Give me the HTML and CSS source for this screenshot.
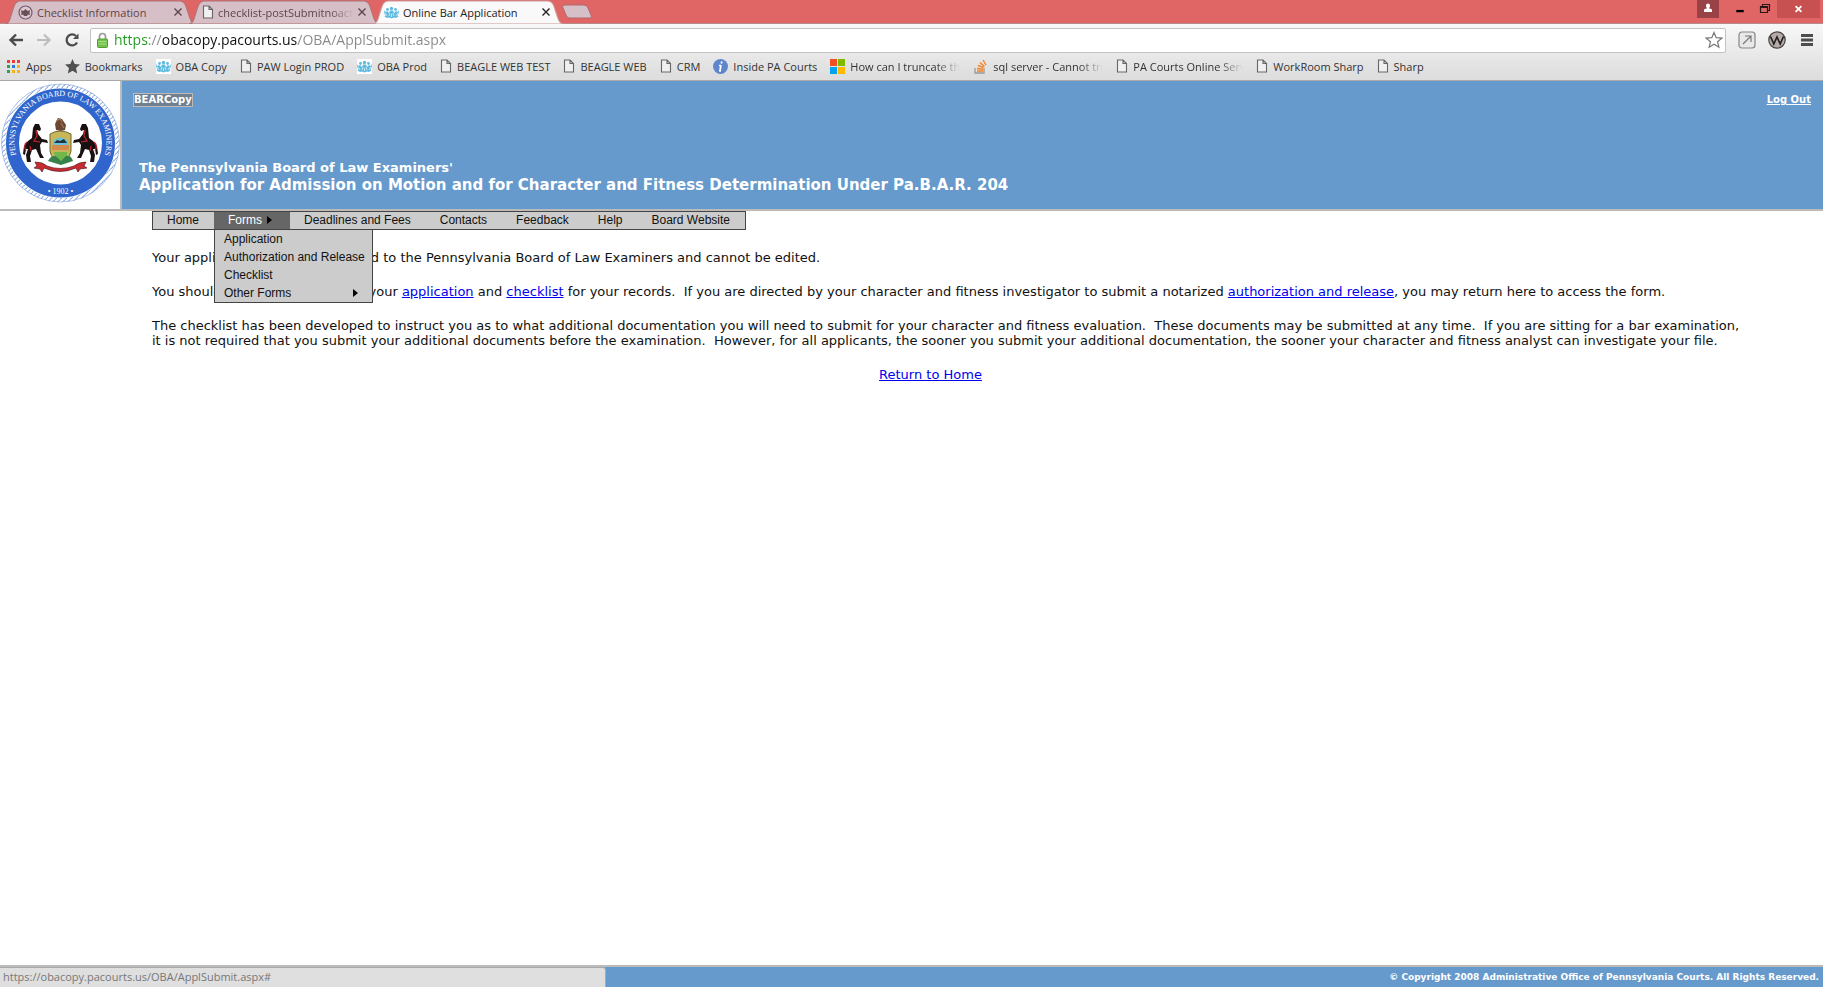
FILE: index.html
```html
<!DOCTYPE html>
<html lang="en">
<head>
<meta charset="utf-8">
<title>Online Bar Application</title>
<link rel="stylesheet" href="styles.css">
</head>
<body>
<svg class="defs" aria-hidden="true">
  <symbol id="page" viewBox="0 0 12 14"><path d="M1.500 1h5.500l3.500 3.500V13h-9zM7 1v3.500h3.500" fill="#f0f0f0" stroke="#666" stroke-width="1.100"/></symbol>
  <symbol id="oba" viewBox="0 0 15 15"><path fill="#fff" d="M0 0h15v15H0z"/><g fill="#5fbbe0"><circle cx="7.500" cy="3.500" r="1.700"/><circle cx="3.500" cy="4.500" r="1.400"/><circle cx="11.500" cy="4.500" r="1.400"/><path d="M0 5l1.500 2L3 6l2 2 1-2.500h3L10 8l2-2 1.500 1L15 5l-.5 4-1 1 1 1.500-2.500 1.500-2-.5-2.500 1-2.500-1-2 .5L.5 11.500l1-1.500-1-1z"/></g><path d="M5 11l1-3M10 11L9 8M7.500 12V9M2.500 11l-1-3M12.500 11l1-3" stroke="#d8f2fb" stroke-width=".8"/></symbol>
  <symbol id="x" viewBox="0 0 8 8"><path d="M.5.5l7 7M7.500.5l-7 7" stroke="currentColor" stroke-width="1.400"/></symbol>
</svg>

<header class="browser">
  <div class="tabstrip">
    <div class="tabs" role="tablist">
      <div class="tab"><svg class="shape" viewBox="0 0 190 23" preserveAspectRatio="none"><path d="M0 23C5 22 5 18 7 12S10 1 15 1H175C180 1 181 6 183 12S186 22 190 23Z"/></svg>
        <button class="tab-label" role="tab"><svg class="ico15" viewBox="0 0 15 15"><circle cx="7.500" cy="7.500" r="6.500" fill="#dcc7cc" stroke="#6d5b73" stroke-width="1.200"/><path d="M3 5l2 1 1-.5L7.500 4 9 5.500l1 .5 2-1-.5 3 .5 2-2-.5-1 1.500H6L5 9.500 3 10l.5-2z" fill="#695058"/></svg><span>Checklist Information</span></button>
        <button class="tab-close" aria-label="Close Checklist Information"><svg><use href="#x"/></svg></button></div>
      <div class="tab"><svg class="shape" viewBox="0 0 190 23" preserveAspectRatio="none"><path d="M0 23C5 22 5 18 7 12S10 1 15 1H175C180 1 181 6 183 12S186 22 190 23Z"/></svg>
        <button class="tab-label" role="tab"><svg class="pg"><use href="#page"/></svg><span class="fade">checklist-postSubmitnoaction</span></button>
        <button class="tab-close" aria-label="Close checklist"><svg><use href="#x"/></svg></button></div>
      <div class="tab active"><svg class="shape" viewBox="0 0 190 23" preserveAspectRatio="none"><path d="M0 23C5 22 5 18 7 12S10 1 15 1H175C180 1 181 6 183 12S186 22 190 23Z"/></svg>
        <button class="tab-label" role="tab" aria-selected="true"><svg class="ico15"><use href="#oba"/></svg><span>Online Bar Application</span></button>
        <button class="tab-close" aria-label="Close Online Bar Application"><svg><use href="#x"/></svg></button></div>
      <button class="newtab" aria-label="New tab"><svg viewBox="0 0 32 15"><path d="M4 1H22C25 1 26 2 27 4L30 11C31 13 30 14 28 14H9C7 14 6 13 5 11L2 4C1 2 2 1 4 1Z" fill="#d6c0c8" stroke="#b0686e"/></svg></button>
    </div>
    <div class="window-controls">
      <button class="user" aria-label="Profile"><svg viewBox="0 0 22 18"><circle cx="11" cy="5.500" r="2"/><path d="M9 6h4l-1 2.500h-2zM7 12V9.500l2-1h4l2 1V12z"/></svg></button>
      <button class="min" aria-label="Minimize"><svg viewBox="0 0 28 18"><path d="M10 10h8v2.500h-8z"/></svg></button>
      <button class="max" aria-label="Restore"><svg viewBox="0 0 20 18"><path d="M5.500 6.500h7v6h-7zM5 7.500h8M7.500 6V4.500h7v6H13" fill="none" stroke="#2b1717" stroke-width="1.200"/></svg></button>
      <button class="close" aria-label="Close"><svg viewBox="0 0 44 18"><path d="M19 6l6 6M25 6l-6 6" stroke="#fff" stroke-width="1.800"/></svg></button>
    </div>
  </div>
  <div class="toolbar">
    <button aria-label="Back"><svg viewBox="0 0 16 16"><path d="M15 8H3M8 2.500L2.500 8 8 13.500" fill="none" stroke="#4b4b4b" stroke-width="2.400"/></svg></button>
    <button aria-label="Forward"><svg viewBox="0 0 16 16"><path d="M1 8h12M8 2.500L13.500 8 8 13.500" fill="none" stroke="#bdbdbd" stroke-width="2.200"/></svg></button>
    <button aria-label="Reload"><svg viewBox="0 0 16 16"><path d="M13 10.500A5.500 5.500 0 1 1 12 4" fill="none" stroke="#4b4b4b" stroke-width="2.300"/><path d="M14.500 1.500V7H9z" fill="#4b4b4b"/></svg></button>
    <label class="omnibox">
      <svg class="lock" viewBox="0 0 11 16"><path d="M2.500 8V4.500a3 3 0 0 1 6 0V8" fill="none" stroke="#999" stroke-width="1.700"/><rect x=".5" y="7" width="10" height="8.500" rx="1" fill="#76c14c" stroke="#529c34"/><path d="M1.500 9.500h8M1.500 12h8" stroke="#a6df84"/></svg>
      <input type="text" aria-label="Address" value="https://obacopy.pacourts.us/OBA/ApplSubmit.aspx">
      <svg class="fav" viewBox="0 0 18 18"><path d="M9 1.500l2.200 5.200 5.600.4-4.300 3.600 1.400 5.500L9 13.200l-4.900 3 1.400-5.500L1.200 7.100l5.600-.4z" fill="#fff" stroke="#777" stroke-width="1.200"/></svg>
    </label>
    <button class="ext" aria-label="Open externally"><svg viewBox="0 0 18 18"><rect x="1" y="1" width="16" height="16" rx="3" fill="#e8e8e8" stroke="#858585" stroke-width="1.200"/><path d="M5 13l8-8M7 5h6v6" fill="none" stroke="#777" stroke-width="1.200"/></svg></button>
    <button class="ext" aria-label="W extension"><svg viewBox="0 0 18 18"><circle cx="9" cy="9" r="8.200" fill="#b7aba7" stroke="#444" stroke-width="1.200"/><path d="M2.500 5.500l3.300 7.500L9 6l3.200 7 3.300-7.500" fill="none" stroke="#222" stroke-width="1.700"/></svg></button>
    <button class="ext" aria-label="Menu"><svg viewBox="0 0 18 18"><path d="M3 4.500h12M3 9h12M3 13.500h12" stroke="#4d4d4d" stroke-width="2.800"/></svg></button>
  </div>
  <nav class="bookmarks" aria-label="Bookmarks">
    <a href="#"><svg class="ico15" viewBox="0 0 15 15"><path d="M1 1h3v3H1zM6 1h3v3H6zM11 1h3v3h-3z" fill="#ea3d35"/><path d="M1 6h3v3H1zM1 11h3v3H1z" fill="#2ba24c"/><path d="M6 6h3v3H6z" fill="#2c7be5"/><path d="M11 6h3v3h-3zM6 11h3v3H6zM11 11h3v3h-3z" fill="#f6b312"/></svg><span>Apps</span></a>
    <a href="#"><svg class="ico15" viewBox="0 0 15 15"><path d="M7.500 0l2.200 5 5.300.5-4 3.600 1.200 5.400-4.700-2.800-4.700 2.800L4 9.100 0 5.500 5.300 5z" fill="#505050"/></svg><span>Bookmarks</span></a>
    <a href="#"><svg class="ico15"><use href="#oba"/></svg><span>OBA Copy</span></a>
    <a href="#"><svg class="pg"><use href="#page"/></svg><span>PAW Login PROD</span></a>
    <a href="#"><svg class="ico15"><use href="#oba"/></svg><span>OBA Prod</span></a>
    <a href="#"><svg class="pg"><use href="#page"/></svg><span>BEAGLE WEB TEST</span></a>
    <a href="#"><svg class="pg"><use href="#page"/></svg><span>BEAGLE WEB</span></a>
    <a href="#"><svg class="pg"><use href="#page"/></svg><span>CRM</span></a>
    <a href="#"><svg class="ico15" viewBox="0 0 15 15"><circle cx="7.500" cy="7.500" r="7.500" fill="#5e86cc"/><path d="M8.800 2.500l-.4 2M8 6l-1.200 6.500M6 6.500h2M6 12h2" stroke="#fff" stroke-width="1.700"/></svg><span>Inside PA Courts</span></a>
    <a href="#"><svg class="ico15" viewBox="0 0 15 15"><path d="M0 0h7v7H0z" fill="#f25022"/><path d="M8 0h7v7H8z" fill="#7fba00"/><path d="M0 8h7v7H0z" fill="#00a4ef"/><path d="M8 8h7v7H8z" fill="#ffb900"/></svg><span class="fade">How can I truncate the text</span></a>
    <a href="#"><svg class="ico15" viewBox="0 0 15 15"><path d="M2 9v5h9V9" fill="none" stroke="#999" stroke-width="1.300"/><path d="M4 12h6M4 9.500l6 .8M5 6.500l5.500 2M7 3.500l4.500 4M10 1l3 5" stroke="#f48024" stroke-width="1.400"/></svg><span class="fade">sql server - Cannot truncate table</span></a>
    <a href="#"><svg class="pg"><use href="#page"/></svg><span class="fade">PA Courts Online Services</span></a>
    <a href="#"><svg class="pg"><use href="#page"/></svg><span>WorkRoom Sharp</span></a>
    <a href="#"><svg class="pg"><use href="#page"/></svg><span>Sharp</span></a>
  </nav>
</header>

<section class="banner">
  <div class="seal">
    <svg viewBox="0 0 120 126" role="img" aria-label="Pennsylvania Board of Law Examiners, 1902">
      <defs>
        <path id="arc" d="M19.500 82A46 46 0 1 1 101.500 82"/>
        <pattern id="rope" width="5" height="5" patternUnits="userSpaceOnUse"><path d="M0 0h5v5H0z" fill="#fff"/><path d="M-1 4Q2 3 4-1M2 6Q5 5 7 1" fill="none" stroke="#6f97dd" stroke-width="1"/></pattern>
      </defs>
      <circle cx="60.500" cy="62" r="57" fill="none" stroke="url(#rope)" stroke-width="4"/>
      <circle cx="60.500" cy="62" r="59" fill="none" stroke="#7d9fdc" stroke-width=".6"/>
      <circle cx="60.500" cy="62" r="48" fill="#fff" stroke="#2f65cc" stroke-width="13"/>
      <text class="seal-name"><textPath href="#arc" startOffset="50%">PENNSYLVANIA BOARD OF LAW EXAMINERS</textPath></text>
      <text class="seal-year" x="60.500" y="113">• 1902 •</text>
      <g id="horse"><path d="M33 47l2-4 4 0 2 5-1 2-3-1 1 4 4 5 5 1 1 3-6-1-2 3 1 8 3 5h-4l-4-9-4 1-2 6 1 6h-4l-1-7 2-6-2 0-1 6-2-1 1-8 4-5 4-3z" fill="#191012"/><path d="M36 49l1 6-3 5 6 1M30 65l1 5M27 61q-4 3-1 9" fill="none" stroke="#c02431" stroke-width="1.200"/></g>
      <use href="#horse" transform="matrix(-1 0 0 1 121 0)"/>
      <path d="M50 53q10-6 21 0v17q-2 10-10.500 13Q52 80 50 70z" fill="#c8b659" stroke="#6c6731"/>
      <path d="M53 60q7-7 15 0v4H53z" fill="#66c3df"/><path d="M54 62h13l-3-4-4 2-3-1z" fill="#27343e"/>
      <path d="M52 64h17v5H52z" fill="#d58a4d"/><path d="M54 71h13v5l-6 4-6-4z" fill="#70b84c"/>
      <path d="M48 80q4-7 9-4l4 4 5-5q5-1 7 5l-12 4z" fill="#38814a"/>
      <path d="M56 49l-1-6 3-6 4 1 4 6-1 5-4 1z" fill="#6c4733"/><path d="M56 40l4-2 2 3M61 42l3 5" fill="none" stroke="#b9845a"/>
      <path d="M34 87l3-2-2-4q8 0 12 4 13 5 27 0 5-4 12-4l-2 4 3 2-7 1-2 3-2-4q-16 7-32 0l-2 4-2-3z" fill="#c92b32" stroke="#591c1f" stroke-width=".7"/>
    </svg>
  </div>
  <div class="banner-main">
    <div class="banner-top"><span class="env">BEARCopy</span><a href="#" class="logout">Log Out</a></div>
    <h1><small>The Pennsylvania Board of Law Examiners'</small>Application for Admission on Motion and for Character and Fitness Determination Under Pa.B.A.R. 204</h1>
  </div>
</section>

<nav class="menu" aria-label="Main">
  <a href="#">Home</a>
  <div class="has-sub"><a href="#" class="open">Forms<i class="arrow"></i></a>
    <div class="submenu"><a href="#">Application</a><a href="#">Authorization and Release</a><a href="#">Checklist</a><a href="#">Other Forms<i class="arrow"></i></a></div>
  </div>
  <a href="#">Deadlines and Fees</a><a href="#">Contacts</a><a href="#">Feedback</a><a href="#">Help</a><a href="#">Board Website</a>
</nav>

<main>
  <p>Your application has been released to the Pennsylvania Board of Law Examiners and cannot be edited.</p>
  <p>You should print a record of both your <a href="#">application</a> and <a href="#">checklist</a> for your records.&nbsp; If you are directed by your character and fitness investigator to submit a notarized <a href="#">authorization and release</a>, you may return here to access the form.</p>
  <p>The checklist has been developed to instruct you as to what additional documentation you will need to submit for your character and fitness evaluation.&nbsp; These documents may be submitted at any time.&nbsp; If you are sitting for a bar examination, it is not required that you submit your additional documents before the examination.&nbsp; However, for all applicants, the sooner you submit your additional documentation, the sooner your character and fitness analyst can investigate your file.</p>
  <p class="return"><a href="#">Return to Home</a></p>
</main>
<footer>© Copyright 2008 Administrative Office of Pennsylvania Courts. All Rights Reserved.</footer>
<div class="status">https://obacopy.pacourts.us/OBA/ApplSubmit.aspx#</div>
</body>
</html>
```
FILE: styles.css
```css
* { box-sizing: border-box; }
body {
  margin: 0; min-height: 100vh; display: flex; flex-direction: column;
  background: #fff; color: #111; font: 13px/15px "DejaVu Sans", sans-serif;
}
button { border: 0; padding: 0; background: none; font: inherit; color: inherit; }
svg { display: block; flex: none; }
.defs { position: absolute; width: 0; height: 0; }
.ico15 { width: 15px; height: 15px; }
.pg { width: 12px; height: 14px; }

.browser { font: 11px/15px "Open Sans", sans-serif; background: linear-gradient(#f8f8f8 24px, #dedede 76px); border-bottom: 1px solid #aaa; }
.tabstrip { display: flex; justify-content: space-between; height: 24px; background: #e06666; border-bottom: 1px solid #b98a8c; }
.tabs { display: flex; padding-left: 5px; }
.tab { position: relative; width: 190px; height: 24px; margin-right: -6px; padding: 0 10px 0 13px; display: flex; align-items: center; color: #5d454b; }
.tab .shape { position: absolute; inset: 0; width: 100%; height: 100%; }
.shape path { fill: #d6bfc6; stroke: #ad7379; }
.tab.active { z-index: 1; padding-left: 11px; color: #222; }
.active .shape path { fill: #f9f9f9; stroke: #c99; }
.tab-label { position: relative; flex: 1; min-width: 0; display: flex; align-items: center; gap: 4px; white-space: nowrap; }
.fade { overflow: hidden; mask-image: linear-gradient(90deg, #000 calc(100% - 24px), transparent); }
.tab-close { position: relative; width: 15px; }
.tab-close svg { width: 8px; height: 8px; margin: auto; }
.newtab { width: 32px; margin-left: 4px; }
.newtab svg { width: 32px; height: 15px; }
.window-controls { display: flex; align-items: flex-start; padding-right: 3px; }
.window-controls svg { height: 18px; width: 100%; }
.user { width: 22px; margin-right: 8px; background: #994248; }
.user svg { fill: #fff; }
.min { width: 26px; }
.max { width: 24px; }
.close { width: 43px; background: #c75050; }

.toolbar { display: flex; align-items: center; height: 32px; padding: 0 7px 0 8px; gap: 12px; }
.toolbar button svg { width: 16px; height: 16px; }
.toolbar .ext svg { width: 18px; height: 18px; }
.omnibox { flex: 1; display: flex; align-items: center; gap: 6px; height: 25px; margin-left: -2px; padding: 0 2px 0 6px; background: #fff; border: 1px solid #c2c2c2; border-radius: 2px; }
.omnibox input {
  flex: 1; min-width: 0; border: 0; padding: 0; outline: 0; font: 14px/20px "Open Sans", sans-serif; color: transparent;
  background: linear-gradient(90deg, #1c9a1c 35px, #888 35px 48px, #111 48px 183px, #888 183px); background-clip: text; -webkit-background-clip: text;
}
.lock { width: 11px; height: 16px; }
.fav { width: 18px; height: 18px; }
.bookmarks { display: flex; gap: 13px; height: 24px; padding: 0 6px 4px; }
.bookmarks a { display: flex; align-items: center; gap: 5px; color: #333; text-decoration: none; white-space: nowrap; }
.bookmarks .fade { width: 110px; }

.banner { display: flex; border-bottom: 2px solid #bbb; background: #69c; color: #fff; }
.seal { background: #fff; border-right: 2px solid #bbb; padding-bottom: 2px; }
.seal svg { width: 120px; height: 126px; }
.seal-name { font: 8px "Liberation Serif", serif; fill: #fff; text-anchor: middle; }
.seal-year { font: 8px "Liberation Serif", serif; fill: #fff; text-anchor: middle; }
.banner-main { flex: 1; display: flex; flex-direction: column; justify-content: space-between; padding: 12px 12px 15px 11px; }
.banner-top { display: flex; justify-content: space-between; align-items: center; font-size: 10px; line-height: 12px; font-weight: bold; }
.env { background: #708090; border: 1px solid #bbb; }
.logout { color: #fff; }
h1 { margin: 0 0 0 6px; font-size: 15px; line-height: 18px; }
h1 small { display: block; font-size: 13px; line-height: 16px; }

.menu { display: flex; align-self: flex-start; margin-left: 152px; border: 1px solid #444; background: #ccc; font: 12px/17px "Liberation Sans", sans-serif; }
.menu a { display: block; color: #111; text-decoration: none; padding: 0 15px 0 14px; white-space: nowrap; }
.has-sub { position: relative; }
.menu .open { background: #666; color: #fff; padding-right: 18px; }
.arrow { display: inline-block; border: 4px solid transparent; border-left: 5px solid #000; border-right: 0; margin-left: 5px; }
.submenu { position: absolute; top: 17px; left: 0; width: 159px; border: 1px solid #444; background: #ccc; line-height: 18px; }
.submenu a { display: flex; justify-content: space-between; align-items: center; padding: 0 14px 0 9px; }
.submenu a:nth-child(2) { padding-right: 9px; }

main { flex: 1; margin: 0 78px 0 152px; padding-top: 20px; }
p { margin: 0 0 19px; }
main a { color: #00e; }
.return { text-align: center; padding-right: 36px; }
footer { padding: 0 4px; border-top: 2px solid #bbb; background: #69c; color: #fff; text-align: right; font-size: 9px; font-weight: bold; line-height: 20px; }
.status { position: fixed; left: 0; bottom: 0; width: 606px; height: 20px; padding-left: 3px; background: #dfdfdf; border: solid #aaa; border-width: 1px 1px 0 0; border-radius: 0 3px 0 0; color: #777; font: 11px/18px "Open Sans", sans-serif; }
```
